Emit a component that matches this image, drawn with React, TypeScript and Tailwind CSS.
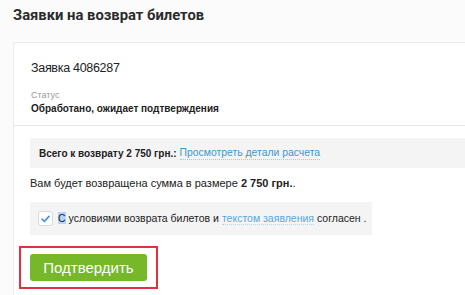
import React from "react";

export default function App() {
  return (
    <div
      className="w-[465px] h-[295px] overflow-hidden bg-[#fbfbfb] text-[#222]"
      style={{ fontFamily: '"Liberation Sans", Arial, sans-serif' }}
    >
      <div className="pl-[13px] pt-[5px] h-[42px]">
        <h1
          className="text-[14.8px] font-bold leading-[20px] text-[#2b2b2b]"
          style={{ fontFamily: 'Roboto, "Liberation Sans", sans-serif' }}
        >
          Заявки на возврат билетов
        </h1>
      </div>
      <div className="ml-[13px] h-[253px] bg-white border-l border-t border-[#ececec] rounded-tl-[3px]">
        <div className="px-[17px] pt-[16px] h-[82px]">
          <div className="text-[12.5px] tracking-[-0.3px] leading-[18px] text-[#222]">Заявка 4086287</div>
          <div className="mt-[12px] text-[9px] leading-[12px] text-[#9a9a9a]">Статус</div>
          <div className="mt-[1px] text-[10px] leading-[14px] font-bold text-[#222]">Обработано, ожидает подтверждения</div>
        </div>
        <div className="h-px bg-[#e8e8e8]" />
        <div className="pl-[16px] pt-[12px]">
          <div className="h-[30px] bg-[#f4f4f4] flex items-center pl-[9px] text-[10px]">
            <span className="font-bold">Всего к возврату 2 750 грн.:</span>
            <span className="ml-[3px] text-[10.4px] text-[#3a98cf] border-b border-dotted border-[#9ccbe6] leading-[13px]">Просмотреть детали расчета</span>
          </div>
          <div className="mt-[7px] text-[11px] leading-[17px]">
            Вам будет возвращена сумма в размере <span className="font-bold">2 750 грн.</span>.
          </div>
          <div className="mt-[10px] w-[342px] h-[33px] bg-[#f4f4f4] flex items-center pl-[8px] text-[10.5px] whitespace-nowrap">
            <span className="w-[15px] h-[15px] shrink-0 rounded-[3px] bg-white border border-[#d6dbe0] flex items-center justify-center">
              <svg width="9" height="8" viewBox="0 0 9 8">
                <path d="M1 4.2 L3.4 6.4 L8 1.4" fill="none" stroke="#4a90e2" strokeWidth="1.6" strokeLinecap="round" strokeLinejoin="round" />
              </svg>
            </span>
            <span className="ml-[5px]">
              <span className="bg-[#b3d4fc]">С</span> условиями возврата билетов и{" "}
              <span className="text-[#5aa7e0] border-b border-dotted border-[#b5d6ef]">текстом заявления</span> согласен .
            </span>
          </div>
          <div className="mt-[11px] -ml-[11px] w-[139px] h-[43px] border-2 border-[#e3303c] flex items-center pl-[9px]">
            <button className="w-[117px] h-[27px] rounded-[3px] bg-[#76b82a] text-white text-[15px] leading-[27px]">
              Подтвердить
            </button>
          </div>
        </div>
      </div>
    </div>
  );
}
